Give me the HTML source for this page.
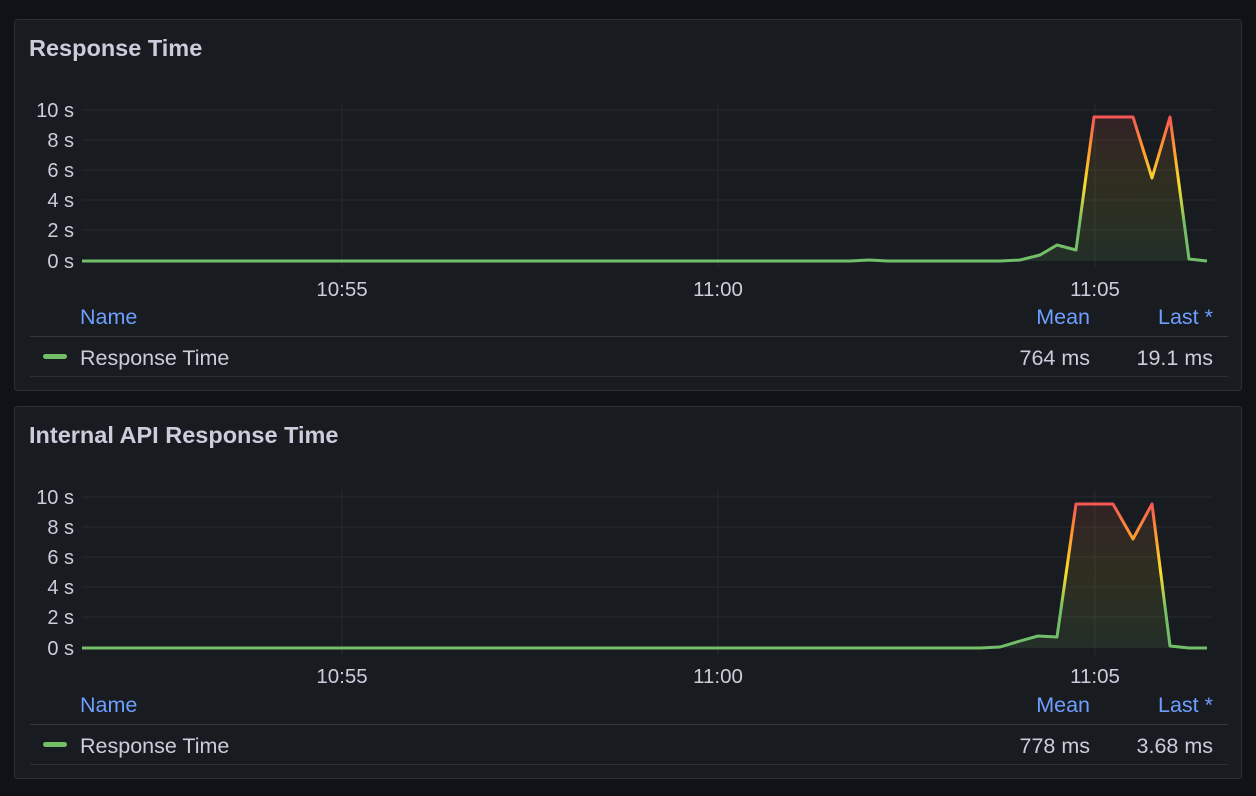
<!DOCTYPE html>
<html><head><meta charset="utf-8"><style>
html,body{margin:0;padding:0;background:#111217;width:1256px;height:796px;overflow:hidden}
svg{display:block}
text{font-family:"Liberation Sans",sans-serif}
</style></head><body>
<svg width="1256" height="796" viewBox="0 0 1256 796">
<defs>
<linearGradient id="g1" gradientUnits="userSpaceOnUse" x1="0" y1="261" x2="0" y2="110">
<stop offset="0" stop-color="#73bf69"/><stop offset="0.25" stop-color="#73bf69"/><stop offset="0.5" stop-color="#fade2a"/><stop offset="0.75" stop-color="#ff9830"/><stop offset="1" stop-color="#f2495c"/></linearGradient>
<linearGradient id="f1" gradientUnits="userSpaceOnUse" x1="0" y1="261" x2="0" y2="110">
<stop offset="0" stop-color="#73bf69" stop-opacity="0.12"/><stop offset="0.5" stop-color="#fade2a" stop-opacity="0.1"/><stop offset="1" stop-color="#f2495c" stop-opacity="0.12"/></linearGradient>
<linearGradient id="g2" gradientUnits="userSpaceOnUse" x1="0" y1="648" x2="0" y2="497">
<stop offset="0" stop-color="#73bf69"/><stop offset="0.25" stop-color="#73bf69"/><stop offset="0.5" stop-color="#fade2a"/><stop offset="0.75" stop-color="#ff9830"/><stop offset="1" stop-color="#f2495c"/></linearGradient>
<linearGradient id="f2" gradientUnits="userSpaceOnUse" x1="0" y1="648" x2="0" y2="497">
<stop offset="0" stop-color="#73bf69" stop-opacity="0.12"/><stop offset="0.5" stop-color="#fade2a" stop-opacity="0.1"/><stop offset="1" stop-color="#f2495c" stop-opacity="0.12"/></linearGradient>
</defs>

<!-- Panel 1 -->
<rect x="14.5" y="19.5" width="1227" height="371" rx="3" fill="#181b1f" stroke="#2c2f35"/>
<text x="29" y="56" font-size="23.5" font-weight="bold" fill="#ccccdc">Response Time</text>
<g stroke="#26282d" stroke-width="1">
<line x1="82" y1="110" x2="1213" y2="110"/><line x1="82" y1="140" x2="1213" y2="140"/><line x1="82" y1="170" x2="1213" y2="170"/><line x1="82" y1="200" x2="1213" y2="200"/><line x1="82" y1="230" x2="1213" y2="230"/>
<line x1="342" y1="103" x2="342" y2="268"/><line x1="718" y1="103" x2="718" y2="268"/><line x1="1095" y1="103" x2="1095" y2="268"/>
</g>
<g font-size="20" fill="#ccccdc" text-anchor="end">
<text x="74" y="117">10 s</text><text x="74" y="147">8 s</text><text x="74" y="177">6 s</text><text x="74" y="207">4 s</text><text x="74" y="237">2 s</text><text x="74" y="268">0 s</text></g>
<g font-size="20.5" fill="#ccccdc" text-anchor="middle">
<text x="342" y="296">10:55</text><text x="718" y="296">11:00</text><text x="1095" y="296">11:05</text></g>
<path d="M82,261 L850,261 L869,260 L888,261 L1000,261 L1020,260 L1040,255 L1057,245 L1076,250 L1094,117 L1133,117 L1152,178 L1170,117 L1189,259 L1207,261 L1207,261 L82,261Z" fill="url(#f1)"/>
<path d="M82,261 L850,261 L869,260 L888,261 L1000,261 L1020,260 L1040,255 L1057,245 L1076,250 L1094,117 L1133,117 L1152,178 L1170,117 L1189,259 L1207,261" fill="none" stroke="url(#g1)" stroke-width="3" stroke-linejoin="round"/>
<g font-size="21.5" fill="#6e9fff">
<text x="80" y="324">Name</text><text x="1090" y="324" text-anchor="end">Mean</text><text x="1213" y="324" text-anchor="end">Last *</text></g>
<line x1="30" y1="336.5" x2="1228" y2="336.5" stroke="#34373d"/>
<line x1="30" y1="376.5" x2="1228" y2="376.5" stroke="#2c2f35"/>
<rect x="43" y="354" width="24" height="5" rx="2.5" fill="#73bf69"/>
<g font-size="21.5" fill="#ccccdc">
<text x="80" y="365">Response Time</text><text x="1090" y="365" text-anchor="end">764 ms</text><text x="1213" y="365" text-anchor="end">19.1 ms</text></g>

<!-- Panel 2 -->
<rect x="14.5" y="406.5" width="1227" height="372" rx="3" fill="#181b1f" stroke="#2c2f35"/>
<text x="29" y="443" font-size="23.5" font-weight="bold" fill="#ccccdc">Internal API Response Time</text>
<g stroke="#26282d" stroke-width="1">
<line x1="82" y1="497" x2="1213" y2="497"/><line x1="82" y1="527" x2="1213" y2="527"/><line x1="82" y1="557" x2="1213" y2="557"/><line x1="82" y1="587" x2="1213" y2="587"/><line x1="82" y1="617" x2="1213" y2="617"/>
<line x1="342" y1="490" x2="342" y2="655"/><line x1="718" y1="490" x2="718" y2="655"/><line x1="1095" y1="490" x2="1095" y2="655"/>
</g>
<g font-size="20" fill="#ccccdc" text-anchor="end">
<text x="74" y="504">10 s</text><text x="74" y="534">8 s</text><text x="74" y="564">6 s</text><text x="74" y="594">4 s</text><text x="74" y="624">2 s</text><text x="74" y="655">0 s</text></g>
<g font-size="20.5" fill="#ccccdc" text-anchor="middle">
<text x="342" y="683">10:55</text><text x="718" y="683">11:00</text><text x="1095" y="683">11:05</text></g>
<path d="M82,648 L980,648 L1000,647 L1020,641 L1038,636 L1057,637 L1076,504 L1113,504 L1133,539 L1152,504 L1170,646 L1189,648 L1207,648 L82,648Z" fill="url(#f2)"/>
<path d="M82,648 L980,648 L1000,647 L1020,641 L1038,636 L1057,637 L1076,504 L1113,504 L1133,539 L1152,504 L1170,646 L1189,648 L1207,648" fill="none" stroke="url(#g2)" stroke-width="3" stroke-linejoin="round"/>
<g font-size="21.5" fill="#6e9fff">
<text x="80" y="712">Name</text><text x="1090" y="712" text-anchor="end">Mean</text><text x="1213" y="712" text-anchor="end">Last *</text></g>
<line x1="30" y1="724.5" x2="1228" y2="724.5" stroke="#34373d"/>
<line x1="30" y1="764.5" x2="1228" y2="764.5" stroke="#2c2f35"/>
<rect x="43" y="742" width="24" height="5" rx="2.5" fill="#73bf69"/>
<g font-size="21.5" fill="#ccccdc">
<text x="80" y="753">Response Time</text><text x="1090" y="753" text-anchor="end">778 ms</text><text x="1213" y="753" text-anchor="end">3.68 ms</text></g>
</svg>
</body></html>
